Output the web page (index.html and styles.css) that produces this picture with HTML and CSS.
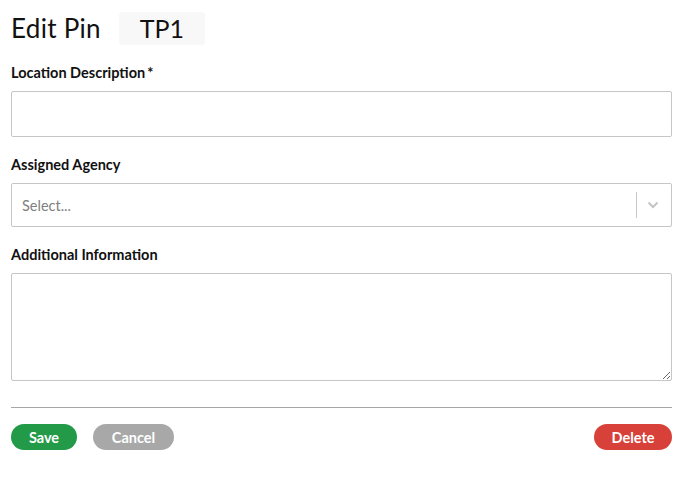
FILE: index.html
```html
<!DOCTYPE html>
<html lang="en">
<head>
  <meta charset="UTF-8">
  <title>Edit Pin</title>
  <link rel="stylesheet" href="styles.css">
</head>
<body>
  <div class="form">
    <div class="header">
      <h1>Edit Pin</h1>
      <span class="pin-id">TP1</span>
    </div>

    <label class="label">Location Description<span class="req">*</span></label>
    <input class="text-input" type="text">

    <label class="label">Assigned Agency</label>
    <div class="select">
      <span class="placeholder">Select...</span>
      <span class="sep"></span>
      <svg class="chevron" width="12" height="8" viewBox="0 0 12 8">
        <path d="M1.5 1.5 L6 6 L10.5 1.5" fill="none" stroke="#c4c4c4" stroke-width="2"/>
      </svg>
    </div>

    <label class="label">Additional Information</label>
    <textarea class="textarea"></textarea>

    <hr class="divider">

    <div class="actions">
      <button class="btn save">Save</button>
      <button class="btn cancel">Cancel</button>
      <button class="btn delete">Delete</button>
    </div>
  </div>
</body>
</html>
```

FILE: styles.css
```css
* {
  margin: 0;
  padding: 0;
  box-sizing: border-box;
  font-family: 'Lato', sans-serif;
}

body {
  background-color: #fff;
  color: #111;
  padding: 11px 12px 0 11px;
}

.form {
  display: flex;
  flex-direction: column;
}

/* Header */
.header {
  display: flex;
  align-items: center;
  gap: 18px;
  height: 34px;
}

.header h1 {
  font-size: 26px;
  font-weight: 400;
  letter-spacing: 0.3px;
  color: #111;
}

.pin-id {
  display: inline-flex;
  align-items: center;
  justify-content: center;
  width: 86px;
  height: 33px;
  background-color: #f8f8f8;
  border-radius: 4px;
  font-size: 25px;
  color: #111;
}

/* Labels and fields */
.label {
  font-size: 14.5px;
  font-weight: 700;
  color: #111;
  margin-top: 19px;
  margin-bottom: 9px;
  line-height: 18px;
}

.req {
  margin-left: 2px;
}

.text-input {
  height: 46px;
  border: 1px solid #c6c6c6;
  border-radius: 2px;
  outline: none;
}

.select {
  display: flex;
  align-items: center;
  height: 44px;
  border: 1px solid #c6c6c6;
  border-radius: 2px;
  padding-left: 10px;
}

.placeholder {
  flex: 1;
  font-size: 14.5px;
  color: #808080;
}

.sep {
  width: 1px;
  height: 26px;
  background-color: #c8c8c8;
}

.chevron {
  margin: 0 12px 0 10px;
}

.textarea {
  height: 108px;
  border: 1px solid #c6c6c6;
  border-radius: 2px;
  resize: vertical;
  outline: none;
}

.divider {
  border: none;
  border-top: 1px solid #a6a6a6;
  margin-top: 26px;
}

/* Buttons */
.actions {
  display: flex;
  align-items: center;
  gap: 16px;
  margin-top: 16px;
}

.btn {
  height: 26px;
  border: none;
  border-radius: 13px;
  color: #fff;
  font-size: 14.5px;
  font-weight: 700;
  padding: 0 12px;
  cursor: pointer;
}

.save {
  background-color: #229a47;
  width: 66px;
}

.cancel {
  background-color: #a8a8a8;
  width: 81px;
}

.delete {
  background-color: #d8403a;
  width: 78px;
  margin-left: auto;
}
```
